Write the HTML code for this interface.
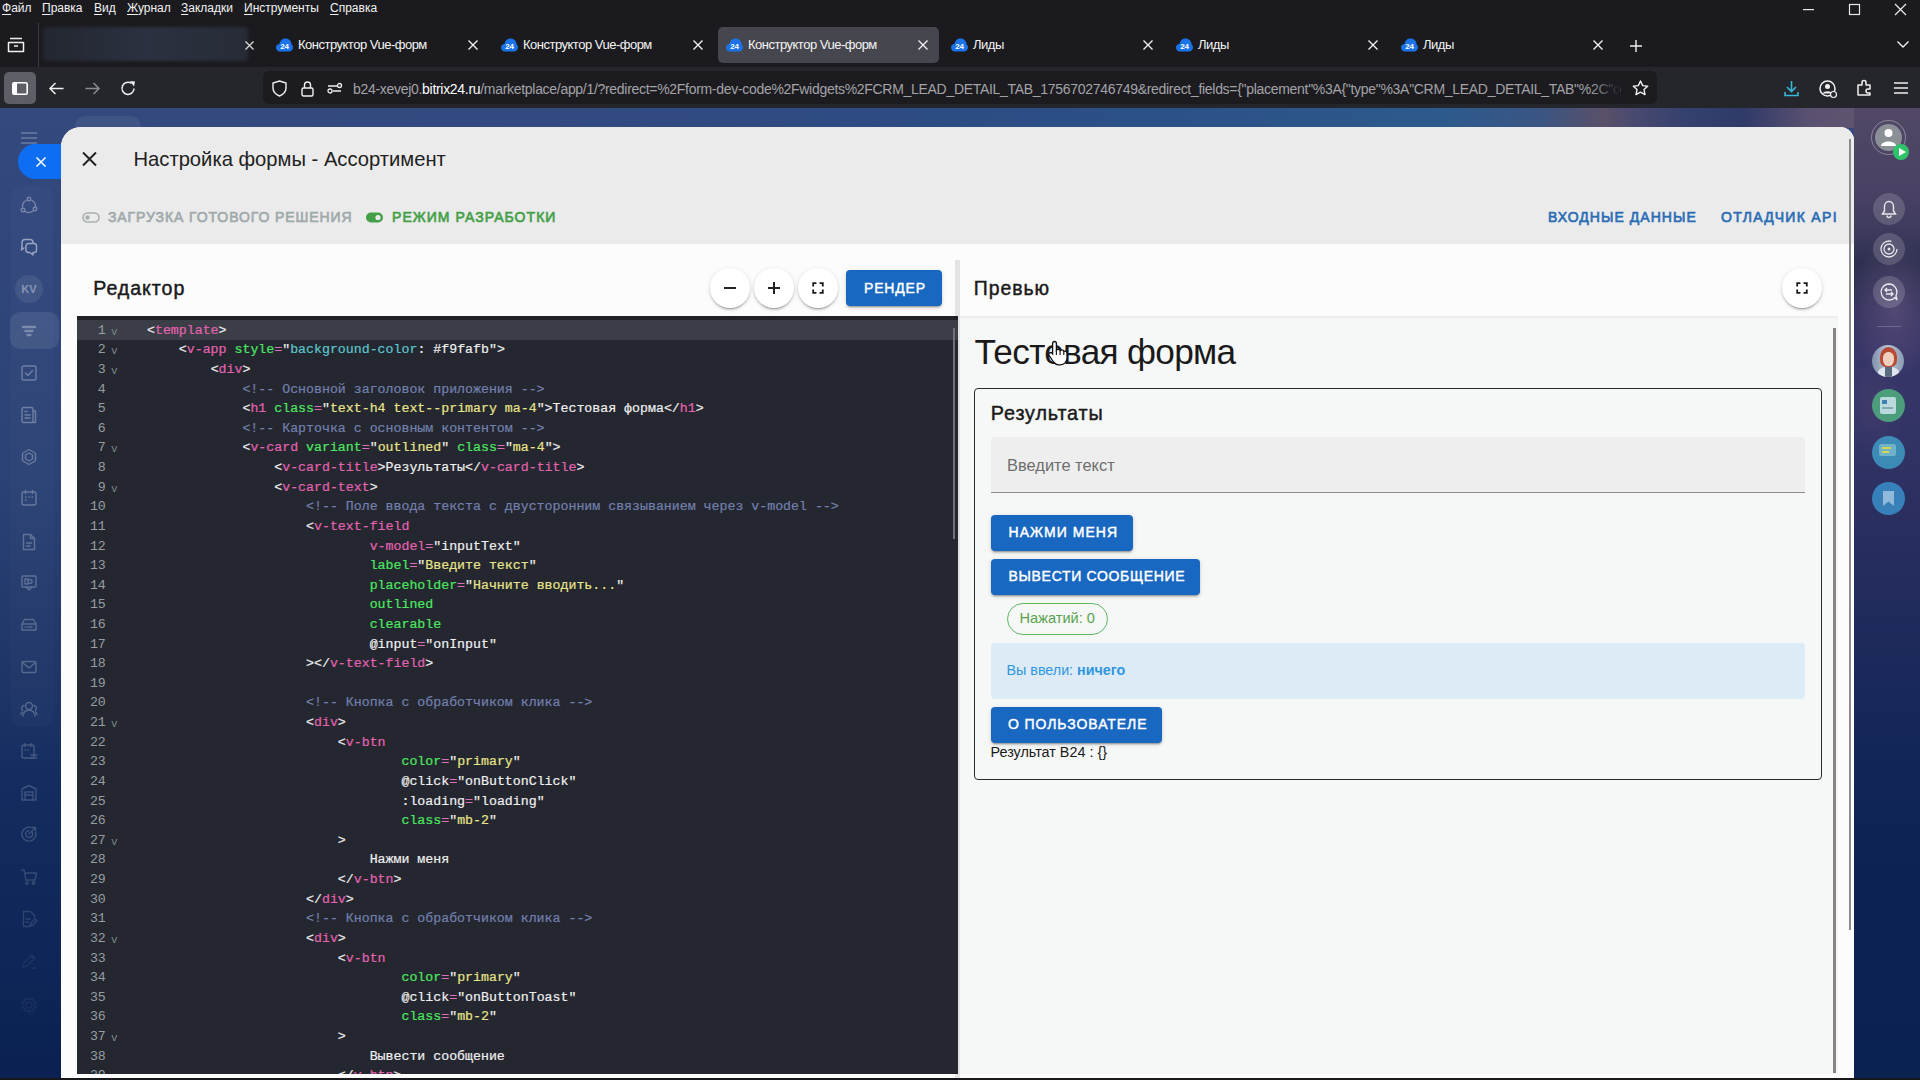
<!DOCTYPE html>
<html><head><meta charset="utf-8">
<style>
*{box-sizing:border-box;margin:0;padding:0}
html,body{width:1920px;height:1080px;overflow:hidden}
body{position:relative;background:#1c1b21;font-family:"Liberation Sans",sans-serif;color:#fff}
.a{position:absolute}
svg{display:block;overflow:visible}
/* chrome */
#menubar{left:0;top:0;width:1920px;height:67px;background:#1b1b1f}
.mi{position:absolute;top:0px;font-size:12px;line-height:17px;color:#f2f2f2;white-space:nowrap}
.mi u{text-decoration:underline;text-underline-offset:2px}
#navbar{left:0;top:67px;width:1920px;height:41px;background:#25262b}
#url{left:263px;top:71px;width:1394px;height:33px;background:#1c1c20;border-radius:6px}
.tab{position:absolute;top:27px;height:36px;width:220px;border-radius:6px}
.tab .fav{position:absolute;left:18px;top:12px;width:17px;height:13px}
.tab .tt{position:absolute;left:40px;top:10px;font-size:14px;line-height:16px;color:#f0f0f0;white-space:nowrap}
.tab .cx{position:absolute;right:10px;top:12px;width:12px;height:12px}
/* page */
#page{left:0;top:108px;width:1920px;height:970px;background:linear-gradient(180deg,#34497e 0%,#2f467b 20%,#2a4275 38%,#1c3466 61%,#142d60 69%,#0c2555 92%,#0a2151 100%);overflow:hidden}

#panel{left:61px;top:127px;width:1793px;height:951px;background:#fcfcfc;border-radius:20px 14px 0 0;overflow:hidden}
#phead{left:0;top:0;width:1793px;height:117px;background:#ebebeb}
.ico{stroke:rgba(255,255,255,0.32);fill:none;stroke-width:1.6}
.rs{position:absolute;left:1873px;width:32px;height:32px;border-radius:50%;background:rgba(255,255,255,0.16)}

.t{white-space:nowrap}
.ln{position:absolute;left:0;width:28.8px;text-align:right;font-family:"Liberation Mono",monospace;font-size:13.25px;line-height:19.62px;color:#969ea0}
.fd{position:absolute;left:34px;margin-top:2px;font-family:"Liberation Mono",monospace;font-size:11px;line-height:19.62px;color:#7f868a}
.cl{position:absolute;left:70px;white-space:pre;font-family:"Liberation Mono",monospace;font-size:13.25px;line-height:19.62px;color:#ececec;-webkit-text-stroke:0.2px currentColor}
#bottomstrip{left:0;top:1078px;width:1920px;height:2px;background:#17181c}
</style></head>
<body>
<!-- menubar + tabs -->
<div id="menubar" class="a"></div>
<div class="mi" style="left:2px"><u>Ф</u>айл</div>
<div class="mi" style="left:42px"><u>П</u>равка</div>
<div class="mi" style="left:94px"><u>В</u>ид</div>
<div class="mi" style="left:127px"><u>Ж</u>урнал</div>
<div class="mi" style="left:181px"><u>З</u>акладки</div>
<div class="mi" style="left:244px"><u>И</u>нструменты</div>
<div class="mi" style="left:330px"><u>С</u>правка</div>

<div id="navbar" class="a"></div>
<div id="url" class="a"></div>
<div id="page" class="a"></div>

<!-- window controls -->
<svg class="a" style="left:1803px;top:9px" width="11" height="1"><rect width="11" height="1.2" fill="#e8e8e8"/></svg>
<svg class="a" style="left:1849px;top:4px" width="11" height="11"><rect x="0.5" y="0.5" width="10" height="10" fill="none" stroke="#e8e8e8" stroke-width="1.2"/></svg>
<svg class="a" style="left:1895px;top:4px" width="11" height="11"><path d="M0 0L11 11M11 0L0 11" stroke="#e8e8e8" stroke-width="1.3"/></svg>
<!-- tabs row -->
<svg class="a" style="left:7px;top:37px" width="18" height="16"><path d="M3 1.5h12M1.5 5.5h15v9h-15z" fill="none" stroke="#f0f0f0" stroke-width="1.5" stroke-linejoin="round"/><path d="M7 9h4" stroke="#f0f0f0" stroke-width="1.5"/></svg>
<div class="a" style="left:38px;top:23px;width:1px;height:44px;background:#3a3a40"></div>
<div class="a" style="left:43px;top:27px;width:205px;height:34px;background:linear-gradient(90deg,#222630,#2b3140 50%,#262b36);filter:blur(1.5px);border-radius:4px"></div>
<svg class="a" style="left:245px;top:41px" width="9" height="9"><path d="M0.5 0.5L8.5 8.5M8.5 0.5L0.5 8.5" stroke="#d8d8d8" stroke-width="1.3"/></svg>
<div class="a" style="left:718px;top:27px;width:221px;height:36px;background:#46464e;border-radius:5px"></div>
<svg class="a" style="left:276px;top:38px" width="17" height="14"><path d="M4 13.5C1.5 13.5 0 11.5 0 9.5C0 7.5 1.5 6 3.5 6C4 2.5 6.5 0.5 9.5 0.5C13 0.5 15.5 3 15.5 6.3C16.5 7 17 8.3 17 9.5C17 11.8 15.2 13.5 13 13.5Z" fill="#1a73e8"/><text x="8.6" y="11.2" font-family="Liberation Sans" font-size="8" font-weight="bold" fill="#fff" text-anchor="middle">24</text></svg><div class="a" style="left:298px;top:37px;font-size:13px;letter-spacing:-0.5px;line-height:16px;color:#f4f4f4;white-space:nowrap">Конструктор Vue-форм</div><svg class="a" style="left:468px;top:40px" width="10" height="10"><path d="M0.5 0.5L9.5 9.5M9.5 0.5L0.5 9.5" stroke="#f0f0f0" stroke-width="1.4"/></svg><svg class="a" style="left:501px;top:38px" width="17" height="14"><path d="M4 13.5C1.5 13.5 0 11.5 0 9.5C0 7.5 1.5 6 3.5 6C4 2.5 6.5 0.5 9.5 0.5C13 0.5 15.5 3 15.5 6.3C16.5 7 17 8.3 17 9.5C17 11.8 15.2 13.5 13 13.5Z" fill="#1a73e8"/><text x="8.6" y="11.2" font-family="Liberation Sans" font-size="8" font-weight="bold" fill="#fff" text-anchor="middle">24</text></svg><div class="a" style="left:523px;top:37px;font-size:13px;letter-spacing:-0.5px;line-height:16px;color:#f4f4f4;white-space:nowrap">Конструктор Vue-форм</div><svg class="a" style="left:693px;top:40px" width="10" height="10"><path d="M0.5 0.5L9.5 9.5M9.5 0.5L0.5 9.5" stroke="#f0f0f0" stroke-width="1.4"/></svg><svg class="a" style="left:726px;top:38px" width="17" height="14"><path d="M4 13.5C1.5 13.5 0 11.5 0 9.5C0 7.5 1.5 6 3.5 6C4 2.5 6.5 0.5 9.5 0.5C13 0.5 15.5 3 15.5 6.3C16.5 7 17 8.3 17 9.5C17 11.8 15.2 13.5 13 13.5Z" fill="#1a73e8"/><text x="8.6" y="11.2" font-family="Liberation Sans" font-size="8" font-weight="bold" fill="#fff" text-anchor="middle">24</text></svg><div class="a" style="left:748px;top:37px;font-size:13px;letter-spacing:-0.5px;line-height:16px;color:#f4f4f4;white-space:nowrap">Конструктор Vue-форм</div><svg class="a" style="left:918px;top:40px" width="10" height="10"><path d="M0.5 0.5L9.5 9.5M9.5 0.5L0.5 9.5" stroke="#f0f0f0" stroke-width="1.4"/></svg><svg class="a" style="left:951px;top:38px" width="17" height="14"><path d="M4 13.5C1.5 13.5 0 11.5 0 9.5C0 7.5 1.5 6 3.5 6C4 2.5 6.5 0.5 9.5 0.5C13 0.5 15.5 3 15.5 6.3C16.5 7 17 8.3 17 9.5C17 11.8 15.2 13.5 13 13.5Z" fill="#1a73e8"/><text x="8.6" y="11.2" font-family="Liberation Sans" font-size="8" font-weight="bold" fill="#fff" text-anchor="middle">24</text></svg><div class="a" style="left:973px;top:37px;font-size:13px;letter-spacing:-0.5px;line-height:16px;color:#f4f4f4;white-space:nowrap">Лиды</div><svg class="a" style="left:1143px;top:40px" width="10" height="10"><path d="M0.5 0.5L9.5 9.5M9.5 0.5L0.5 9.5" stroke="#f0f0f0" stroke-width="1.4"/></svg><svg class="a" style="left:1176px;top:38px" width="17" height="14"><path d="M4 13.5C1.5 13.5 0 11.5 0 9.5C0 7.5 1.5 6 3.5 6C4 2.5 6.5 0.5 9.5 0.5C13 0.5 15.5 3 15.5 6.3C16.5 7 17 8.3 17 9.5C17 11.8 15.2 13.5 13 13.5Z" fill="#1a73e8"/><text x="8.6" y="11.2" font-family="Liberation Sans" font-size="8" font-weight="bold" fill="#fff" text-anchor="middle">24</text></svg><div class="a" style="left:1198px;top:37px;font-size:13px;letter-spacing:-0.5px;line-height:16px;color:#f4f4f4;white-space:nowrap">Лиды</div><svg class="a" style="left:1368px;top:40px" width="10" height="10"><path d="M0.5 0.5L9.5 9.5M9.5 0.5L0.5 9.5" stroke="#f0f0f0" stroke-width="1.4"/></svg><svg class="a" style="left:1401px;top:38px" width="17" height="14"><path d="M4 13.5C1.5 13.5 0 11.5 0 9.5C0 7.5 1.5 6 3.5 6C4 2.5 6.5 0.5 9.5 0.5C13 0.5 15.5 3 15.5 6.3C16.5 7 17 8.3 17 9.5C17 11.8 15.2 13.5 13 13.5Z" fill="#1a73e8"/><text x="8.6" y="11.2" font-family="Liberation Sans" font-size="8" font-weight="bold" fill="#fff" text-anchor="middle">24</text></svg><div class="a" style="left:1423px;top:37px;font-size:13px;letter-spacing:-0.5px;line-height:16px;color:#f4f4f4;white-space:nowrap">Лиды</div><svg class="a" style="left:1593px;top:40px" width="10" height="10"><path d="M0.5 0.5L9.5 9.5M9.5 0.5L0.5 9.5" stroke="#f0f0f0" stroke-width="1.4"/></svg>
<svg class="a" style="left:1630px;top:40px" width="12" height="12"><path d="M6 0V12M0 6H12" stroke="#f0f0f0" stroke-width="1.4"/></svg>
<svg class="a" style="left:1897px;top:41px" width="12" height="7"><path d="M0.5 0.5L6 6L11.5 0.5" fill="none" stroke="#f0f0f0" stroke-width="1.4"/></svg>
<!-- nav -->
<div class="a" style="left:4px;top:72px;width:32px;height:32px;background:#5e5e66;border-radius:5px"></div>
<svg class="a" style="left:12px;top:82px" width="16" height="13"><rect x="0.8" y="0.8" width="14.4" height="11.4" rx="1.5" fill="none" stroke="#fff" stroke-width="1.6"/><rect x="1" y="1" width="4" height="11" fill="#fff"/></svg>
<svg class="a" style="left:49px;top:82px" width="15" height="13"><path d="M14.5 6.5H1.5M6.5 1L1 6.5L6.5 12" fill="none" stroke="#f0f0f0" stroke-width="1.5"/></svg>
<svg class="a" style="left:85px;top:82px" width="15" height="13"><path d="M0.5 6.5H13.5M8.5 1L14 6.5L8.5 12" fill="none" stroke="#8a8a90" stroke-width="1.5"/></svg>
<svg class="a" style="left:121px;top:80px" width="15" height="16"><path d="M13 8.5A6 6 0 1 1 10.5 3.5" fill="none" stroke="#f0f0f0" stroke-width="1.5"/><path d="M9 1L14 1.5L13 6.5Z" fill="#f0f0f0"/></svg>
<svg class="a" style="left:272px;top:80px" width="15" height="17"><path d="M7.5 1L14 3V8C14 12 11 14.5 7.5 16C4 14.5 1 12 1 8V3Z" fill="none" stroke="#f0f0f0" stroke-width="1.4"/></svg>
<svg class="a" style="left:301px;top:80px" width="13" height="17"><path d="M3.5 8V5A3 3 0 0 1 9.5 5V8" fill="none" stroke="#f0f0f0" stroke-width="1.4"/><rect x="1" y="8" width="11" height="8" rx="1.5" fill="none" stroke="#f0f0f0" stroke-width="1.4"/></svg>
<svg class="a" style="left:327px;top:82px" width="16" height="12"><path d="M1 4H10M14 9H6" stroke="#f0f0f0" stroke-width="1.4"/><circle cx="12.5" cy="3.5" r="2" fill="none" stroke="#f0f0f0" stroke-width="1.3"/><circle cx="3" cy="9" r="2" fill="none" stroke="#f0f0f0" stroke-width="1.3"/></svg>
<div class="a" style="left:353px;top:80px;font-size:14px;letter-spacing:-0.3px;line-height:18px;white-space:nowrap;color:#a3a3a8;width:1268px;overflow:hidden">b24-xevej0.<span style="color:#fbfbfe">bitrix24.ru</span>/marketplace/app/1/?redirect=%2Fform-dev-code%2Fwidgets%2FCRM_LEAD_DETAIL_TAB_1756702746749&amp;redirect_fields={"placement"%3A{"type"%3A"CRM_LEAD_DETAIL_TAB"%2C"options</div>
<div class="a" style="left:1590px;top:72px;width:30px;height:30px;background:linear-gradient(90deg,rgba(28,28,32,0),#1c1c20)"></div>
<svg class="a" style="left:1632px;top:80px" width="17" height="16"><path d="M8.5 1L10.7 5.6L15.7 6.2L12 9.6L13 14.6L8.5 12.1L4 14.6L5 9.6L1.3 6.2L6.3 5.6Z" fill="none" stroke="#f0f0f0" stroke-width="1.4" stroke-linejoin="round"/></svg>
<svg class="a" style="left:1784px;top:80px" width="15" height="17"><path d="M7.5 1V11M3 7L7.5 11.5L12 7M1 12V15.5H14V12" fill="none" stroke="#37b7d6" stroke-width="1.6"/></svg>
<svg class="a" style="left:1819px;top:80px" width="19" height="18"><circle cx="8.5" cy="8.5" r="7.5" fill="none" stroke="#f0f0f0" stroke-width="1.5"/><circle cx="8.5" cy="6.5" r="2.5" fill="#f0f0f0"/><path d="M3.5 13.5C5 10.5 12 10.5 13.5 13.5" fill="#f0f0f0"/><circle cx="14.5" cy="14.5" r="3" fill="#25262b" stroke="#f0f0f0" stroke-width="1.2"/></svg>
<svg class="a" style="left:1857px;top:80px" width="15" height="16"><path d="M1 5H5V2.5A2 2 0 0 1 9 2.5V5H13V9H11A2 2 0 0 0 11 13H13V15H1Z" fill="none" stroke="#f0f0f0" stroke-width="1.5" stroke-linejoin="round"/></svg>
<svg class="a" style="left:1894px;top:82px" width="14" height="12"><path d="M0 1H14M0 6H14M0 11H14" stroke="#f0f0f0" stroke-width="1.5"/></svg>


<!-- page bg extras -->
<div class="a" style="left:0;top:108px;width:1854px;height:20px;background:linear-gradient(90deg,#34497e 0%,#324a80 30%,#2d4c84 52%,#2b5088 62%,#2d5a8c 78%,#3a5584 83%,#5a5068 86.5%,#4a4a70 88%,#34406e 91%,#2f3a68 94%,#5a5070 97.5%,#5f5470 100%)"></div>
<div class="a" style="left:1854px;top:108px;width:66px;height:970px;background:
radial-gradient(ellipse 45px 70px at 40px 200px,rgba(130,105,150,0.4),rgba(130,105,150,0) 100%),
radial-gradient(ellipse 30px 50px at 20px 300px,rgba(90,70,120,0.3),rgba(90,70,120,0) 100%),
linear-gradient(180deg,#524866 0%,#4a4264 8%,#3c3a5c 13%,#2e3050 16%,#383668 25%,#333466 33%,#2a2f60 42%,#202b5c 52%,#162858 62%,#0d2453 75%,#0a2250 100%)"></div>
<div class="a" style="left:75px;top:116px;width:66px;height:20px;border-radius:10px;background:rgba(255,255,255,0.06)"></div>
<!-- left sidebar -->
<svg class="a" style="left:21px;top:132px" width="16" height="12"><path d="M0 1H16M0 6H16M0 11H16" stroke="rgba(255,255,255,0.28)" stroke-width="1.6"/></svg>
<div class="a" style="left:18px;top:144px;width:60px;height:35px;border-radius:18px;background:#0d6ef4"></div>
<svg class="a" style="left:36px;top:157px" width="10" height="10"><path d="M0.5 0.5L9.5 9.5M9.5 0.5L0.5 9.5" stroke="#fff" stroke-width="1.5"/></svg>
<div class="a" style="left:11px;top:186px;width:42px;height:541px;border-radius:12px;background:rgba(255,255,255,0.02)"></div>
<div class="a" style="left:10px;top:312px;width:49px;height:37px;border-radius:10px;background:rgba(255,255,255,0.09)"></div>
<svg class="a" style="left:20px;top:196px;opacity:0.32" width="18" height="18" fill="none" stroke="#fff" stroke-width="1.4" stroke-linecap="round" stroke-linejoin="round"><circle cx="9" cy="3" r="1.8"/><circle cx="3" cy="14" r="1.8"/><circle cx="15" cy="13" r="1.8"/><path d="M6 4.5A7 7 0 0 0 2.5 11M5 15.5A7 7 0 0 0 13 15M15.5 10.5A7 7 0 0 0 12 4.5"/></svg>
<svg class="a" style="left:20px;top:238px;opacity:0.5" width="18" height="18" fill="none" stroke="#fff" stroke-width="1.4" stroke-linecap="round" stroke-linejoin="round"><path d="M2 9V4.5A3 3 0 0 1 5 1.5H10A3 3 0 0 1 13 4.5V5"/><path d="M6 8A2.5 2.5 0 0 1 8.5 5.5H14A2.5 2.5 0 0 1 16.5 8V12A2.5 2.5 0 0 1 14 14.5H13V17L10 14.5H8.5A2.5 2.5 0 0 1 6 12Z"/><path d="M2 9L1.5 12L4 10"/></svg>
<svg class="a" style="left:20px;top:322px;opacity:0.3" width="18" height="18" fill="none" stroke="#fff" stroke-width="1.4" stroke-linecap="round" stroke-linejoin="round"><path d="M3 5H15M5.5 9H12.5M7.5 13H10.5" stroke-width="2.4"/></svg>
<svg class="a" style="left:20px;top:364px;opacity:0.3" width="18" height="18" fill="none" stroke="#fff" stroke-width="1.4" stroke-linecap="round" stroke-linejoin="round"><rect x="2" y="2" width="14" height="14" rx="2"/><path d="M5.5 9L8 11.5L12.5 6.5"/></svg>
<svg class="a" style="left:20px;top:406px;opacity:0.3" width="18" height="18" fill="none" stroke="#fff" stroke-width="1.4" stroke-linecap="round" stroke-linejoin="round"><rect x="2" y="1.5" width="11" height="15" rx="1.5"/><path d="M13 5H15.5V16.5H13M5 5.5H7M5 9H10M5 12H10"/></svg>
<svg class="a" style="left:20px;top:448px;opacity:0.28" width="18" height="18" fill="none" stroke="#fff" stroke-width="1.4" stroke-linecap="round" stroke-linejoin="round"><path d="M9 1.5L15.5 5.25V12.75L9 16.5L2.5 12.75V5.25Z"/><path d="M9 5L12.5 7V11L9 13L5.5 11V7Z"/></svg>
<svg class="a" style="left:20px;top:489px;opacity:0.28" width="18" height="18" fill="none" stroke="#fff" stroke-width="1.4" stroke-linecap="round" stroke-linejoin="round"><rect x="2" y="3" width="14" height="13" rx="2"/><path d="M5.5 1.5V4.5M12.5 1.5V4.5M5.5 8H6M9 8H9.5M12 8H12.5M5.5 11H6"/></svg>
<svg class="a" style="left:20px;top:533px;opacity:0.26" width="18" height="18" fill="none" stroke="#fff" stroke-width="1.4" stroke-linecap="round" stroke-linejoin="round"><path d="M3.5 1.5H10.5L14.5 5.5V16.5H3.5Z"/><path d="M10.5 1.5V5.5H14.5M6.5 10H11.5M6.5 13H10"/></svg>
<svg class="a" style="left:20px;top:574px;opacity:0.25" width="18" height="18" fill="none" stroke="#fff" stroke-width="1.4" stroke-linecap="round" stroke-linejoin="round"><rect x="2" y="2" width="14" height="11" rx="1"/><path d="M5 5H8V10H5ZM10 5.5A2 2 0 1 1 10 9.5A2 2 0 1 1 10 5.5M6 13L9 16L12 13"/></svg>
<svg class="a" style="left:20px;top:616px;opacity:0.24" width="18" height="18" fill="none" stroke="#fff" stroke-width="1.4" stroke-linecap="round" stroke-linejoin="round"><path d="M2 8L4.5 3.5H13.5L16 8V14H2Z"/><path d="M2 8H16M5 11H6M8 11H12"/></svg>
<svg class="a" style="left:20px;top:658px;opacity:0.24" width="18" height="18" fill="none" stroke="#fff" stroke-width="1.4" stroke-linecap="round" stroke-linejoin="round"><rect x="2" y="3.5" width="14" height="11" rx="1.5"/><path d="M2.5 4.5L9 10L15.5 4.5"/></svg>
<svg class="a" style="left:20px;top:700px;opacity:0.24" width="18" height="18" fill="none" stroke="#fff" stroke-width="1.4" stroke-linecap="round" stroke-linejoin="round"><circle cx="9" cy="6" r="3.5"/><path d="M3 16A6 6 0 0 1 15 16M2.5 10.5A3 3 0 0 1 4 5.5M15.5 10.5A3 3 0 0 0 14 5.5M1 14.5A4 4 0 0 1 2.5 12M17 14.5A4 4 0 0 0 15.5 12"/></svg>
<svg class="a" style="left:20px;top:742px;opacity:0.2" width="18" height="18" fill="none" stroke="#fff" stroke-width="1.4" stroke-linecap="round" stroke-linejoin="round"><rect x="2" y="3" width="12" height="13" rx="2"/><path d="M5 1.5V4.5M11 1.5V4.5M5 8H5.5M8 8H8.5M11 16H17M11 13H17"/></svg>
<svg class="a" style="left:20px;top:784px;opacity:0.18" width="18" height="18" fill="none" stroke="#fff" stroke-width="1.4" stroke-linecap="round" stroke-linejoin="round"><path d="M2 16V5L9 1.5L16 5V16Z"/><path d="M5 16V8H13V16M5 11H13"/></svg>
<svg class="a" style="left:20px;top:825px;opacity:0.18" width="18" height="18" fill="none" stroke="#fff" stroke-width="1.4" stroke-linecap="round" stroke-linejoin="round"><path d="M15.5 7A7 7 0 1 1 11 2.5"/><path d="M12 7A3.5 3.5 0 1 1 9 5.5"/><path d="M9 9L15 3M12.5 2.5L15.5 2.5L15.5 5.5"/></svg>
<svg class="a" style="left:20px;top:868px;opacity:0.15" width="18" height="18" fill="none" stroke="#fff" stroke-width="1.4" stroke-linecap="round" stroke-linejoin="round"><path d="M1.5 2H4L6 12H15L16.5 5H5"/><circle cx="7" cy="15" r="1.2"/><circle cx="13.5" cy="15" r="1.2"/></svg>
<svg class="a" style="left:20px;top:910px;opacity:0.13" width="18" height="18" fill="none" stroke="#fff" stroke-width="1.4" stroke-linecap="round" stroke-linejoin="round"><path d="M10 16.5H3.5V1.5H10.5L14.5 5.5V8"/><path d="M6 9H10M6 12H8M10 16L11 13L15 9L17 11L13 15Z"/></svg>
<svg class="a" style="left:20px;top:952px;opacity:0.07" width="18" height="18" fill="none" stroke="#fff" stroke-width="1.4" stroke-linecap="round" stroke-linejoin="round"><path d="M3 15L4 11L12 3L15 6L7 14ZM11 4L14 7M12 16H16"/></svg>
<svg class="a" style="left:20px;top:996px;opacity:0.05" width="18" height="18" fill="none" stroke="#fff" stroke-width="1.4" stroke-linecap="round" stroke-linejoin="round"><circle cx="9" cy="9" r="3"/><path d="M9 1.5L10.5 3.5L13 3L13.5 5.5L16 6.5L15 9L16 11.5L13.5 12.5L13 15L10.5 14.5L9 16.5L7.5 14.5L5 15L4.5 12.5L2 11.5L3 9L2 6.5L4.5 5.5L5 3L7.5 3.5Z"/></svg>
<div class="a" style="left:15px;top:275px;width:28px;height:28px;border-radius:50%;background:rgba(255,255,255,0.08);font-size:11px;font-weight:bold;line-height:28px;text-align:center;color:rgba(255,255,255,0.38)">KV</div>
<!-- right sidebar -->
<div class="a" style="left:1871px;top:120px;width:35px;height:35px;border-radius:50%;border:1.5px solid rgba(255,255,255,0.35)"></div>
<div class="a" style="left:1875px;top:124px;width:27px;height:27px;border-radius:50%;background:#8a9096"></div>
<svg class="a" style="left:1880px;top:128px" width="17" height="20"><circle cx="8.5" cy="5" r="4" fill="#fff"/><path d="M1 18C1 12 16 12 16 18Z" fill="#fff"/></svg>
<div class="a" style="left:1893px;top:144px;width:16px;height:16px;border-radius:50%;background:#2fc26b"></div>
<svg class="a" style="left:1899px;top:148px" width="7" height="8"><path d="M0 0L7 4L0 8Z" fill="#fff"/></svg>
<div class="rs" style="top:193px"></div>
<svg class="a" style="left:1881px;top:200px" width="16" height="18"><path d="M8 1.5C5 1.5 3.5 4 3.5 6.5V11L1.5 14H14.5L12.5 11V6.5C12.5 4 11 1.5 8 1.5ZM6 15.5A2 2 0 0 0 10 15.5" fill="none" stroke="rgba(255,255,255,0.85)" stroke-width="1.4"/></svg>
<div class="rs" style="top:233px"></div>
<svg class="a" style="left:1880px;top:240px" width="18" height="18"><circle cx="9" cy="9" r="8" fill="none" stroke="rgba(255,255,255,0.85)" stroke-width="1.3" stroke-dasharray="40 10"/><circle cx="9" cy="9" r="5" fill="none" stroke="rgba(255,255,255,0.85)" stroke-width="1.3"/><circle cx="9" cy="9" r="1.5" fill="rgba(255,255,255,0.85)"/></svg>
<div class="rs" style="top:276px"></div>
<svg class="a" style="left:1880px;top:283px" width="18" height="18"><path d="M9 1A8 8 0 1 0 15 14.5L17 17L16 12.5A8 8 0 0 0 9 1Z" fill="none" stroke="rgba(255,255,255,0.85)" stroke-width="1.3"/><path d="M5 7H12M7 5L5 7L7 9M13 11H6M11 9L13 11L11 13" fill="none" stroke="rgba(255,255,255,0.85)" stroke-width="1.3"/></svg>
<div class="a" style="left:1877px;top:326px;width:24px;height:1px;background:rgba(255,255,255,0.2)"></div>
<div class="a" style="left:1872px;top:345px;width:32px;height:32px;border-radius:50%;overflow:hidden;background:linear-gradient(90deg,#7f90ab,#b7c4d6 50%,#8a9ab2)">
<div class="a" style="left:8px;top:2px;width:17px;height:20px;border-radius:50% 50% 35% 35%;background:#b84a35"></div>
<div class="a" style="left:11px;top:7px;width:11px;height:14px;border-radius:45%;background:#efcfbd"></div>
<div class="a" style="left:6px;top:22px;width:21px;height:14px;border-radius:40% 40% 0 0;background:#dfe6ee"></div>
<div class="a" style="left:13px;top:22px;width:7px;height:10px;background:#5b6b80"></div>
</div>
<div class="a" style="left:1872px;top:389px;width:33px;height:33px;border-radius:50%;background:#4fa87e;opacity:0.9"></div>
<div class="a" style="left:1880px;top:397px;width:16px;height:17px;border-radius:2px;background:#b9d9dc"></div>
<div class="a" style="left:1882px;top:400px;width:5px;height:4px;background:#3f7fb0"></div>
<div class="a" style="left:1882px;top:407px;width:11px;height:1.5px;background:#7fa9b5"></div>
<div class="a" style="left:1872px;top:436px;width:33px;height:33px;border-radius:50%;background:#3e95bf;opacity:0.9"></div>
<div class="a" style="left:1879px;top:444px;width:17px;height:12px;border-radius:2px;background:#6fb2c9"></div>
<div class="a" style="left:1882px;top:447px;width:9px;height:1.5px;background:#d6d64a"></div>
<div class="a" style="left:1882px;top:451px;width:7px;height:1.5px;background:#d6d64a"></div>
<div class="a" style="left:1872px;top:482px;width:33px;height:33px;border-radius:50%;background:#3a8ac4;opacity:0.9"></div>
<svg class="a" style="left:1883px;top:491px" width="11" height="15"><path d="M0 0H11V15L5.5 10.5L0 15Z" fill="rgba(255,255,255,0.45)"/></svg>
<!-- panel -->
<div id="panel" class="a">
  <div id="phead" class="a"></div>
</div>
<!--CONTENT-->
<svg class="a" style="left:82px;top:152px" width="15" height="14"><path d="M1 0.5L14 13.5M14 0.5L1 13.5" stroke="#222" stroke-width="2"/></svg>
<div class="a t" style="left:133.5px;top:148.50px;font-size:20.2px;line-height:20.2px;color:#212121;font-weight:normal;letter-spacing:0px;">Настройка формы - Ассортимент</div>
<svg class="a" style="left:82px;top:212px" width="18" height="11"><rect x="1" y="1" width="16" height="9" rx="4.5" fill="none" stroke="#a9b0b1" stroke-width="1.6"/><circle cx="5.5" cy="5.5" r="2.2" fill="#a9b0b1"/></svg>
<div class="a t" style="left:108px;top:210.05px;font-size:14px;line-height:14px;color:#9eaaab;font-weight:normal;letter-spacing:0.91px;-webkit-text-stroke:0.65px #9eaaab;">ЗАГРУЗКА ГОТОВОГО РЕШЕНИЯ</div>
<svg class="a" style="left:366px;top:212px" width="17" height="11"><rect x="0" y="0.5" width="17" height="10" rx="5" fill="#43a047"/><circle cx="12" cy="5.5" r="2.6" fill="#ebebeb"/></svg>
<div class="a t" style="left:392px;top:210.05px;font-size:14px;line-height:14px;color:#43a047;font-weight:normal;letter-spacing:1.05px;-webkit-text-stroke:0.65px #43a047;">РЕЖИМ РАЗРАБОТКИ</div>
<div class="a t" style="left:1548px;top:210.35px;font-size:14px;line-height:14px;color:#2a6db5;font-weight:normal;letter-spacing:1.05px;-webkit-text-stroke:0.65px #2a6db5;">ВХОДНЫЕ ДАННЫЕ</div>
<div class="a t" style="left:1721px;top:210.35px;font-size:14px;line-height:14px;color:#2a6db5;font-weight:normal;letter-spacing:1.31px;-webkit-text-stroke:0.65px #2a6db5;">ОТЛАДЧИК API</div>
<div class="a t" style="left:93.3px;top:279.21px;font-size:19.6px;line-height:19.6px;color:#1a1a1a;font-weight:normal;letter-spacing:0.95px;-webkit-text-stroke:0.45px #1a1a1a;">Редактор</div>
<div class="a" style="left:710px;top:268px;width:40px;height:40px;border-radius:50%;background:#fff;box-shadow:0 3px 1px -2px rgba(0,0,0,.2),0 2px 2px 0 rgba(0,0,0,.14),0 1px 5px 0 rgba(0,0,0,.12)"></div>
<svg class="a" style="left:723px;top:281px" width="14" height="14"><path d="M1 7H13" stroke="#222" stroke-width="2"/></svg>
<div class="a" style="left:754px;top:268px;width:40px;height:40px;border-radius:50%;background:#fff;box-shadow:0 3px 1px -2px rgba(0,0,0,.2),0 2px 2px 0 rgba(0,0,0,.14),0 1px 5px 0 rgba(0,0,0,.12)"></div>
<svg class="a" style="left:767px;top:281px" width="14" height="14"><path d="M1 7H13M7 1V13" stroke="#222" stroke-width="2"/></svg>
<div class="a" style="left:798px;top:268px;width:40px;height:40px;border-radius:50%;background:#fff;box-shadow:0 3px 1px -2px rgba(0,0,0,.2),0 2px 2px 0 rgba(0,0,0,.14),0 1px 5px 0 rgba(0,0,0,.12)"></div>
<svg class="a" style="left:811px;top:281px" width="14" height="14"><path d="M2.2 5.4V2.2H5.4M8.6 2.2H11.8V5.4M11.8 8.6V11.8H8.6M5.4 11.8H2.2V8.6" fill="none" stroke="#1a1a1a" stroke-width="1.8"/></svg>
<div class="a" style="left:846px;top:270px;width:96px;height:36px;border-radius:4px;background:#1867c0;box-shadow:0 3px 1px -2px rgba(0,0,0,.2),0 2px 2px 0 rgba(0,0,0,.14),0 1px 5px 0 rgba(0,0,0,.12)"></div>
<div class="a t" style="left:864px;top:281.05px;font-size:14px;line-height:14px;color:#fff;font-weight:normal;letter-spacing:0.83px;-webkit-text-stroke:0.45px #fff;">РЕНДЕР</div>
<div class="a" style="left:955px;top:260px;width:5px;height:818px;background:#e4e4e4"></div>
<div class="a t" style="left:973.8px;top:279.28px;font-size:19.4px;line-height:19.4px;color:#1a1a1a;font-weight:normal;letter-spacing:0.95px;-webkit-text-stroke:0.45px #1a1a1a;">Превью</div>
<div class="a" style="left:1782px;top:268px;width:40px;height:40px;border-radius:50%;background:#fff;box-shadow:0 3px 1px -2px rgba(0,0,0,.2),0 2px 2px 0 rgba(0,0,0,.14),0 1px 5px 0 rgba(0,0,0,.12)"></div>
<svg class="a" style="left:1795px;top:281px" width="14" height="14"><path d="M2.2 5.4V2.2H5.4M8.6 2.2H11.8V5.4M11.8 8.6V11.8H8.6M5.4 11.8H2.2V8.6" fill="none" stroke="#1a1a1a" stroke-width="1.8"/></svg>
<div class="a" style="left:1849px;top:139px;width:2px;height:791px;background:#8c8c8c"></div>
<div class="a" style="left:77px;top:316px;width:881px;height:758px;background:#242730;overflow:hidden">
<div class="a" style="left:0;top:0;width:881px;height:4px;background:#1f2126"></div>
<div class="a" style="left:0;top:4.2px;width:881px;height:19.62px;background:#3b3e46"></div>
<div class="a" style="left:876px;top:12px;width:2px;height:211px;background:#6e7178"></div>
</div>
<div class="a" style="left:77px;top:316px;width:878px;height:758px;overflow:hidden">
<div class="ln" style="top:4.70px">1</div><div class="fd" style="top:4.70px">v</div><div class="cl" style="top:4.70px"><span style="color:#ececec">&lt;</span><span style="color:#e462b0">template</span><span style="color:#ececec">&gt;</span></div>
<div class="ln" style="top:24.32px">2</div><div class="fd" style="top:24.32px">v</div><div class="cl" style="top:24.32px">    <span style="color:#ececec">&lt;</span><span style="color:#e462b0">v-app</span> <span style="color:#4ce860">style</span><span style="color:#e070b8">=</span><span style="color:#f0f0e8">&quot;</span><span style="color:#5cc6cf">background-color</span><span style="color:#f0f0f0">: #f9fafb</span><span style="color:#f0f0e8">&quot;</span><span style="color:#ececec">&gt;</span></div>
<div class="ln" style="top:43.94px">3</div><div class="fd" style="top:43.94px">v</div><div class="cl" style="top:43.94px">        <span style="color:#ececec">&lt;</span><span style="color:#e462b0">div</span><span style="color:#ececec">&gt;</span></div>
<div class="ln" style="top:63.56px">4</div><div class="cl" style="top:63.56px">            <span style="color:#7380ae">&lt;!-- Основной заголовок приложения --&gt;</span></div>
<div class="ln" style="top:83.18px">5</div><div class="cl" style="top:83.18px">            <span style="color:#ececec">&lt;</span><span style="color:#e462b0">h1</span> <span style="color:#4ce860">class</span><span style="color:#e070b8">=</span><span style="color:#f0f0e8">&quot;</span><span style="color:#e8e48a">text-h4 text--primary ma-4</span><span style="color:#f0f0e8">&quot;</span><span style="color:#ececec">&gt;</span><span style="color:#f0f0f0">Тестовая форма</span><span style="color:#ececec">&lt;/</span><span style="color:#e462b0">h1</span><span style="color:#ececec">&gt;</span></div>
<div class="ln" style="top:102.80px">6</div><div class="cl" style="top:102.80px">            <span style="color:#7380ae">&lt;!-- Карточка с основным контентом --&gt;</span></div>
<div class="ln" style="top:122.42px">7</div><div class="fd" style="top:122.42px">v</div><div class="cl" style="top:122.42px">            <span style="color:#ececec">&lt;</span><span style="color:#e462b0">v-card</span> <span style="color:#4ce860">variant</span><span style="color:#e070b8">=</span><span style="color:#f0f0e8">&quot;</span><span style="color:#e8e48a">outlined</span><span style="color:#f0f0e8">&quot;</span> <span style="color:#4ce860">class</span><span style="color:#e070b8">=</span><span style="color:#f0f0e8">&quot;</span><span style="color:#e8e48a">ma-4</span><span style="color:#f0f0e8">&quot;</span><span style="color:#ececec">&gt;</span></div>
<div class="ln" style="top:142.04px">8</div><div class="cl" style="top:142.04px">                <span style="color:#ececec">&lt;</span><span style="color:#e462b0">v-card-title</span><span style="color:#ececec">&gt;</span><span style="color:#f0f0f0">Результаты</span><span style="color:#ececec">&lt;/</span><span style="color:#e462b0">v-card-title</span><span style="color:#ececec">&gt;</span></div>
<div class="ln" style="top:161.66px">9</div><div class="fd" style="top:161.66px">v</div><div class="cl" style="top:161.66px">                <span style="color:#ececec">&lt;</span><span style="color:#e462b0">v-card-text</span><span style="color:#ececec">&gt;</span></div>
<div class="ln" style="top:181.28px">10</div><div class="cl" style="top:181.28px">                    <span style="color:#7380ae">&lt;!-- Поле ввода текста с двусторонним связыванием через v-model --&gt;</span></div>
<div class="ln" style="top:200.90px">11</div><div class="cl" style="top:200.90px">                    <span style="color:#ececec">&lt;</span><span style="color:#e462b0">v-text-field</span></div>
<div class="ln" style="top:220.52px">12</div><div class="cl" style="top:220.52px">                            <span style="color:#e462b0">v-model</span><span style="color:#e070b8">=</span><span style="color:#f0f0e8">&quot;</span><span style="color:#f0f0f0">inputText</span><span style="color:#f0f0e8">&quot;</span></div>
<div class="ln" style="top:240.14px">13</div><div class="cl" style="top:240.14px">                            <span style="color:#4ce860">label</span><span style="color:#e070b8">=</span><span style="color:#f0f0e8">&quot;</span><span style="color:#e8e48a">Введите текст</span><span style="color:#f0f0e8">&quot;</span></div>
<div class="ln" style="top:259.76px">14</div><div class="cl" style="top:259.76px">                            <span style="color:#4ce860">placeholder</span><span style="color:#e070b8">=</span><span style="color:#f0f0e8">&quot;</span><span style="color:#e8e48a">Начните вводить...</span><span style="color:#f0f0e8">&quot;</span></div>
<div class="ln" style="top:279.38px">15</div><div class="cl" style="top:279.38px">                            <span style="color:#4ce860">outlined</span></div>
<div class="ln" style="top:299.00px">16</div><div class="cl" style="top:299.00px">                            <span style="color:#4ce860">clearable</span></div>
<div class="ln" style="top:318.62px">17</div><div class="cl" style="top:318.62px">                            <span style="color:#f0f0f0">@input</span><span style="color:#e070b8">=</span><span style="color:#f0f0e8">&quot;</span><span style="color:#f0f0f0">onInput</span><span style="color:#f0f0e8">&quot;</span></div>
<div class="ln" style="top:338.24px">18</div><div class="cl" style="top:338.24px">                    <span style="color:#ececec">&gt;</span><span style="color:#ececec">&lt;/</span><span style="color:#e462b0">v-text-field</span><span style="color:#ececec">&gt;</span></div>
<div class="ln" style="top:357.86px">19</div><div class="cl" style="top:357.86px"></div>
<div class="ln" style="top:377.48px">20</div><div class="cl" style="top:377.48px">                    <span style="color:#7380ae">&lt;!-- Кнопка с обработчиком клика --&gt;</span></div>
<div class="ln" style="top:397.10px">21</div><div class="fd" style="top:397.10px">v</div><div class="cl" style="top:397.10px">                    <span style="color:#ececec">&lt;</span><span style="color:#e462b0">div</span><span style="color:#ececec">&gt;</span></div>
<div class="ln" style="top:416.72px">22</div><div class="cl" style="top:416.72px">                        <span style="color:#ececec">&lt;</span><span style="color:#e462b0">v-btn</span></div>
<div class="ln" style="top:436.34px">23</div><div class="cl" style="top:436.34px">                                <span style="color:#4ce860">color</span><span style="color:#e070b8">=</span><span style="color:#f0f0e8">&quot;</span><span style="color:#e8e48a">primary</span><span style="color:#f0f0e8">&quot;</span></div>
<div class="ln" style="top:455.96px">24</div><div class="cl" style="top:455.96px">                                <span style="color:#f0f0f0">@click</span><span style="color:#e070b8">=</span><span style="color:#f0f0e8">&quot;</span><span style="color:#f0f0f0">onButtonClick</span><span style="color:#f0f0e8">&quot;</span></div>
<div class="ln" style="top:475.58px">25</div><div class="cl" style="top:475.58px">                                <span style="color:#f0f0f0">:loading</span><span style="color:#e070b8">=</span><span style="color:#f0f0e8">&quot;</span><span style="color:#f0f0f0">loading</span><span style="color:#f0f0e8">&quot;</span></div>
<div class="ln" style="top:495.20px">26</div><div class="cl" style="top:495.20px">                                <span style="color:#4ce860">class</span><span style="color:#e070b8">=</span><span style="color:#f0f0e8">&quot;</span><span style="color:#e8e48a">mb-2</span><span style="color:#f0f0e8">&quot;</span></div>
<div class="ln" style="top:514.82px">27</div><div class="fd" style="top:514.82px">v</div><div class="cl" style="top:514.82px">                        <span style="color:#ececec">&gt;</span></div>
<div class="ln" style="top:534.44px">28</div><div class="cl" style="top:534.44px">                            <span style="color:#f0f0f0">Нажми меня</span></div>
<div class="ln" style="top:554.06px">29</div><div class="cl" style="top:554.06px">                        <span style="color:#ececec">&lt;/</span><span style="color:#e462b0">v-btn</span><span style="color:#ececec">&gt;</span></div>
<div class="ln" style="top:573.68px">30</div><div class="cl" style="top:573.68px">                    <span style="color:#ececec">&lt;/</span><span style="color:#e462b0">div</span><span style="color:#ececec">&gt;</span></div>
<div class="ln" style="top:593.30px">31</div><div class="cl" style="top:593.30px">                    <span style="color:#7380ae">&lt;!-- Кнопка с обработчиком клика --&gt;</span></div>
<div class="ln" style="top:612.92px">32</div><div class="fd" style="top:612.92px">v</div><div class="cl" style="top:612.92px">                    <span style="color:#ececec">&lt;</span><span style="color:#e462b0">div</span><span style="color:#ececec">&gt;</span></div>
<div class="ln" style="top:632.54px">33</div><div class="cl" style="top:632.54px">                        <span style="color:#ececec">&lt;</span><span style="color:#e462b0">v-btn</span></div>
<div class="ln" style="top:652.16px">34</div><div class="cl" style="top:652.16px">                                <span style="color:#4ce860">color</span><span style="color:#e070b8">=</span><span style="color:#f0f0e8">&quot;</span><span style="color:#e8e48a">primary</span><span style="color:#f0f0e8">&quot;</span></div>
<div class="ln" style="top:671.78px">35</div><div class="cl" style="top:671.78px">                                <span style="color:#f0f0f0">@click</span><span style="color:#e070b8">=</span><span style="color:#f0f0e8">&quot;</span><span style="color:#f0f0f0">onButtonToast</span><span style="color:#f0f0e8">&quot;</span></div>
<div class="ln" style="top:691.40px">36</div><div class="cl" style="top:691.40px">                                <span style="color:#4ce860">class</span><span style="color:#e070b8">=</span><span style="color:#f0f0e8">&quot;</span><span style="color:#e8e48a">mb-2</span><span style="color:#f0f0e8">&quot;</span></div>
<div class="ln" style="top:711.02px">37</div><div class="fd" style="top:711.02px">v</div><div class="cl" style="top:711.02px">                        <span style="color:#ececec">&gt;</span></div>
<div class="ln" style="top:730.64px">38</div><div class="cl" style="top:730.64px">                            <span style="color:#f0f0f0">Вывести сообщение</span></div>
<div class="ln" style="top:750.26px">39</div><div class="cl" style="top:750.26px">                        <span style="color:#ececec">&lt;/</span><span style="color:#e462b0">v-btn</span><span style="color:#ececec">&gt;</span></div>
</div>
<div class="a" style="left:960px;top:316px;width:878px;height:758px;background:#f6f8f7;box-shadow:inset 0 2px 3px -1px rgba(0,0,0,0.08)"></div>
<div class="a" style="left:1833px;top:328px;width:2.5px;height:745px;background:#858585"></div>
<div class="a t" style="left:974.5px;top:333.80px;font-size:35.2px;line-height:35.2px;color:#1a1a1a;font-weight:normal;letter-spacing:-0.68px;">Тестовая форма</div>
<div class="a" style="left:974px;top:388px;width:848px;height:392px;border:1.3px solid #2a2a2a;border-radius:4px"></div>
<div class="a t" style="left:990.8px;top:404.34px;font-size:19.8px;line-height:19.8px;color:#1a1a1a;font-weight:normal;letter-spacing:0.85px;-webkit-text-stroke:0.45px #1a1a1a;">Результаты</div>
<div class="a" style="left:991px;top:437px;width:814px;height:56px;background:#edeeed;border-bottom:1px solid #8e8e8e;border-radius:4px 4px 0 0"></div>
<div class="a t" style="left:1007px;top:456.88px;font-size:16.45px;line-height:16.45px;color:#6e6e6e;font-weight:normal;letter-spacing:0px;">Введите текст</div>
<div class="a" style="left:991px;top:515px;width:142px;height:36px;border-radius:4px;background:#1867c0;box-shadow:0 3px 1px -2px rgba(0,0,0,.2),0 2px 2px 0 rgba(0,0,0,.14),0 1px 5px 0 rgba(0,0,0,.12)"></div>
<div class="a t" style="left:1008.5px;top:525.15px;font-size:14px;line-height:14px;color:#fff;font-weight:normal;letter-spacing:1.04px;-webkit-text-stroke:0.45px #fff;">НАЖМИ МЕНЯ</div>
<div class="a" style="left:991px;top:559px;width:209px;height:36px;border-radius:4px;background:#1867c0;box-shadow:0 3px 1px -2px rgba(0,0,0,.2),0 2px 2px 0 rgba(0,0,0,.14),0 1px 5px 0 rgba(0,0,0,.12)"></div>
<div class="a t" style="left:1008.5px;top:568.85px;font-size:14px;line-height:14px;color:#fff;font-weight:normal;letter-spacing:0.68px;-webkit-text-stroke:0.45px #fff;">ВЫВЕСТИ СООБЩЕНИЕ</div>
<div class="a" style="left:1007px;top:603px;width:101px;height:32px;border-radius:16px;border:1px solid #5fb862"></div>
<div class="a t" style="left:1019.5px;top:610.64px;font-size:14.6px;line-height:14.6px;color:#58a24f;font-weight:normal;letter-spacing:0px;">Нажатий: 0</div>
<div class="a" style="left:991px;top:643px;width:814px;height:56px;border-radius:4px;background:#dcebf5"></div>
<div class="a t" style="left:1006.5px;top:662.60px;font-size:14.3px;line-height:14.3px;color:#2f96e0;font-weight:normal;letter-spacing:0px;">Вы ввели: <b>ничего</b></div>
<div class="a" style="left:991px;top:707px;width:171px;height:36px;border-radius:4px;background:#1867c0;box-shadow:0 3px 1px -2px rgba(0,0,0,.2),0 2px 2px 0 rgba(0,0,0,.14),0 1px 5px 0 rgba(0,0,0,.12)"></div>
<div class="a t" style="left:1008px;top:717.15px;font-size:14px;line-height:14px;color:#fff;font-weight:normal;letter-spacing:0.92px;-webkit-text-stroke:0.45px #fff;">О ПОЛЬЗОВАТЕЛЕ</div>
<div class="a t" style="left:990.5px;top:744.63px;font-size:14.38px;line-height:14.38px;color:#1a1a1a;font-weight:normal;letter-spacing:0px;">Результат B24 : {}</div>
<svg class="a" style="left:1047px;top:340px" width="22" height="26" viewBox="0 0 22 26"><path d="M7.5 1.5C8.6 1.5 9.4 2.3 9.4 3.4V10.2C9.8 9.6 10.5 9.3 11.2 9.3C12.1 9.3 12.8 9.8 13.1 10.5C13.5 10.1 14.1 9.8 14.8 9.8C15.8 9.8 16.6 10.5 16.8 11.4C17.1 11.2 17.5 11.1 17.9 11.1C19.1 11.1 20 12 20 13.2V18C20 22 17.2 24.8 13.4 24.8H11.8C9.6 24.8 7.9 23.8 6.6 22L2.2 15.6C1.6 14.7 1.8 13.5 2.7 12.9C3.5 12.4 4.6 12.5 5.2 13.3L5.6 13.8V3.4C5.6 2.3 6.4 1.5 7.5 1.5Z" fill="#fff" stroke="#111" stroke-width="1.3"/><path d="M9.4 10.5V15M13.1 10.8V15M16.8 11.6V15" stroke="#111" stroke-width="1.1"/></svg>
<!--/CONTENT-->
<div id="bottomstrip" class="a"></div>
</body></html>
